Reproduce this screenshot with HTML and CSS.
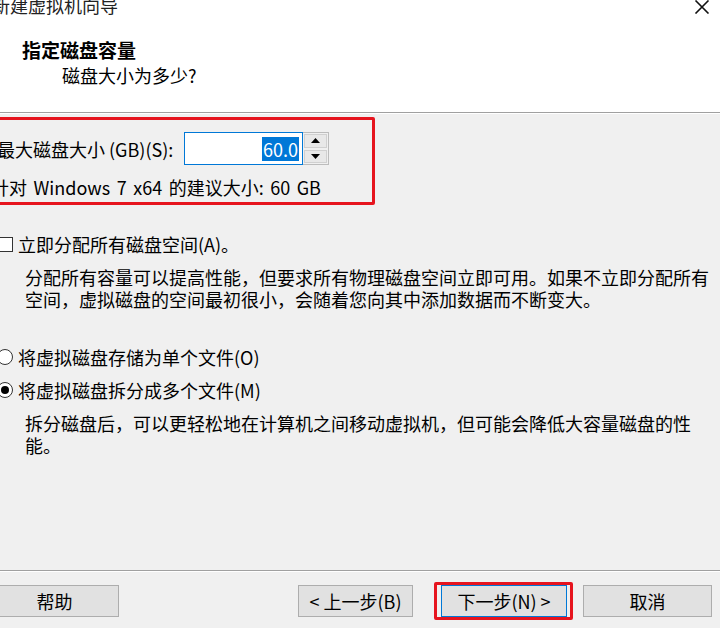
FILE: index.html
```html
<!DOCTYPE html>
<html lang="zh-CN">
<head>
<meta charset="utf-8">
<title>新建虚拟机向导</title>
<link rel="stylesheet" href="styles.css">
</head>
<body>
<div class="page">
  <div class="top">
    <div class="titlebar">
      <span class="wintitle">新建虚拟机向导</span>
      <svg class="close" width="16" height="14" viewBox="0 0 16 14"><path d="M1.5 0.5 L14.5 13.5 M14.5 0.5 L1.5 13.5" stroke="#111" stroke-width="1.6" fill="none"/></svg>
    </div>
    <div class="heading">指定磁盘容量</div>
    <div class="subheading">磁盘大小为多少?</div>
  </div>
  <div class="main">
    <div class="redbox">
      <div class="sizerow">
        <span class="sizelabel">最大磁盘大小 (GB)(S):</span>
        <div class="spinput"><span class="sel">60.0</span></div>
        <div class="spin">
          <div class="spinbtn"><svg width="9" height="5" viewBox="0 0 9 5"><path d="M0 5 L4.5 0 L9 5 Z" fill="#000"/></svg></div>
          <div class="spinbtn"><svg width="9" height="5" viewBox="0 0 9 5"><path d="M0 0 L4.5 5 L9 0 Z" fill="#000"/></svg></div>
        </div>
      </div>
      <div class="recommend">针对 Windows 7 x64 的建议大小: 60 GB</div>
    </div>
    <div class="option check-option">
      <span class="checkbox"></span>
      <span>立即分配所有磁盘空间(A)。</span>
    </div>
    <p class="desc desc1">分配所有容量可以提高性能，但要求所有物理磁盘空间立即可用。如果不立即分配所有<br>空间，虚拟磁盘的空间最初很小，会随着您向其中添加数据而不断变大。</p>
    <div class="option radio-option first">
      <span class="radio"></span>
      <span>将虚拟磁盘存储为单个文件(O)</span>
    </div>
    <div class="option radio-option second">
      <span class="radio checked"></span>
      <span>将虚拟磁盘拆分成多个文件(M)</span>
    </div>
    <p class="desc desc2">拆分磁盘后，可以更轻松地在计算机之间移动虚拟机，但可能会降低大容量磁盘的性<br>能。</p>
  </div>
  <div class="footer">
    <button class="btn help">帮助</button>
    <button class="btn prev">&lt; 上一步(B)</button>
    <div class="redbtnbox"><button class="btn next">下一步(N) &gt;</button></div>
    <button class="btn cancel">取消</button>
  </div>
</div>
</body>
</html>
```
FILE: styles.css
```css
html, body {
  margin: 0;
  padding: 0;
}
body {
  width: 720px;
  height: 628px;
  overflow: hidden;
  background: #f0f0f0;
  font-family: "Noto Sans CJK SC", "Noto Sans", sans-serif;
  font-size: 18px;
  color: #000;
}
.page {
  display: flex;
  flex-direction: column;
  height: 628px;
}
.top {
  background: #fff;
  height: 112px;
  border-bottom: 1px solid #a0a0a0;
  flex: none;
}
.titlebar {
  display: flex;
  align-items: flex-start;
  justify-content: space-between;
  height: 20px;
}
.wintitle {
  margin-left: -8px;
  margin-top: -5px;
  line-height: 20px;
  color: #222;
}
.close {
  flex: none;
  display: block;
  margin-right: 10px;
  margin-top: 0;
}
.heading {
  margin-top: 20px;
  padding-left: 22px;
  font-size: 19px;
  font-weight: bold;
  line-height: 20px;
}
.subheading {
  margin-top: 5px;
  padding-left: 62px;
  line-height: 20px;
}
.main {
  flex: 1;
  box-shadow: inset 0 1px 0 #fff;
}
.redbox {
  margin: 4px 0 0 -10px;
  width: 385px;
  height: 88px;
  box-sizing: border-box;
  border: 3px solid #e6141e;
  border-radius: 2px;
}
.sizerow {
  display: flex;
  align-items: center;
  margin-top: 12px;
  margin-left: 4px;
  height: 33px;
}
.sizelabel {
  width: 187px;
  flex: none;
  white-space: nowrap;
  line-height: 22px;
}
.spinput {
  width: 119px;
  height: 33px;
  box-sizing: border-box;
  border: 1px solid #0078d7;
  background: #fff;
  display: flex;
  justify-content: flex-end;
  align-items: center;
  padding-right: 3px;
}
.sel {
  background: #0078d7;
  color: #fff;
  line-height: 24px;
  padding: 0 1px;
}
.spin {
  width: 26px;
  height: 33px;
  display: flex;
  flex-direction: column;
  box-sizing: border-box;
  border: 1px solid #bcbcbc;
  border-left: none;
  background: #f0f0f0;
}
.spinbtn {
  flex: 1;
  display: flex;
  align-items: center;
  justify-content: center;
  background: #e8e8e8;
  border: 1px solid #d0d0d0;
  margin: 1px;
}
.recommend {
  margin-top: 11px;
  margin-left: -2px;
  line-height: 22px;
  white-space: nowrap;
  word-spacing: 2.5px;
}
.option {
  display: flex;
  align-items: center;
  line-height: 22px;
  white-space: nowrap;
}
.check-option {
  margin-top: 28px;
}
.checkbox {
  width: 13px;
  height: 13px;
  border: 1px solid #333;
  background: #fff;
  margin-left: -2px;
  margin-right: 5px;
  flex: none;
}
.desc {
  margin: 11px 0 0 25px;
  line-height: 22px;
  white-space: nowrap;
}
.radio-option.first {
  margin-top: 36px;
}
.radio-option.second {
  margin-top: 11px;
}
.radio {
  width: 14px;
  height: 14px;
  border: 1px solid #333;
  border-radius: 50%;
  background: #fff;
  margin-left: -3px;
  margin-right: 5px;
  flex: none;
  display: flex;
  align-items: center;
  justify-content: center;
}
.radio.checked::after {
  content: "";
  width: 8px;
  height: 8px;
  border-radius: 50%;
  background: #000;
}
.desc2 {
  margin-top: 11px;
}
.footer {
  flex: none;
  height: 58px;
  box-sizing: border-box;
  border-top: 1px solid #a0a0a0;
  box-shadow: inset 0 1px 0 #fff;
  display: flex;
  align-items: flex-start;
  padding-top: 11px;
}
.btn {
  font-family: inherit;
  font-size: 18px;
  color: #000;
  background: #e1e1e1;
  border: 1px solid #adadad;
  height: 32px;
  padding: 0;
  margin: 0;
  line-height: 30px;
  flex: none;
  margin-top: 3px;
}
.help {
  width: 129px;
  margin-left: -10px;
}
.prev {
  width: 115px;
  margin-left: 179px;
}
.redbtnbox {
  margin-left: 21px;
  width: 139px;
  height: 38px;
  box-sizing: border-box;
  border: 3px solid #e6141e;
  border-radius: 2px;
  padding: 0 3px 0 4px;
  display: flex;
}
.next {
  width: 126px;
  margin-top: 0;
  border: 1px solid #0078d7;
  box-shadow: inset 0 0 0 1px #e1e1e1;
}
.cancel {
  width: 129px;
  margin-left: 10px;
}
```
